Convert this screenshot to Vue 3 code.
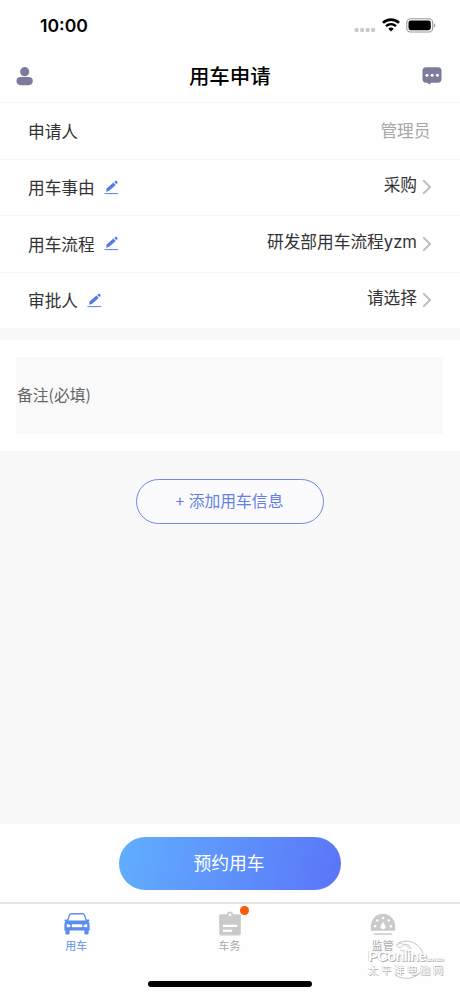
<script setup>
const rows = [
  { label: '申请人', value: '管理员', muted: true },
  { label: '用车事由', value: '采购', edit: true, lift: 'high' },
  { label: '用车流程', value: '研发部用车流程yzm', edit: true, lift: 'low' },
  { label: '审批人', value: '请选择', edit: true, lift: 'high' },
]
</script>

<template>
  <div class="screen">
    <div class="status">
      <span class="time">10:00</span>
      <div class="indicators">
        <svg class="dots" width="22" height="6" viewBox="0 0 22 6" fill="#c9c9cb">
          <rect x="0.7" y="1" width="3.9" height="4" rx="1.3" />
          <rect x="6.2" y="1" width="3.9" height="4" rx="1.3" />
          <rect x="11.7" y="1" width="3.9" height="4" rx="1.3" />
          <rect x="17.2" y="1" width="3.9" height="4" rx="1.3" />
        </svg>
        <svg class="wifi" width="18" height="14" viewBox="0 0 18 14" fill="none" stroke="#000">
          <path d="M1 4.9C5.4.6 12.6.6 17 4.9" stroke-width="2.7" />
          <path d="M4 8.2c2.9-2.7 7.1-2.7 10 0" stroke-width="2.4" />
          <path d="M9 13.4 6.3 10.7c1.6-1.5 3.8-1.5 5.4 0Z" fill="#000" stroke="none" />
        </svg>
        <svg class="battery" width="30" height="15" viewBox="0 0 30 15">
          <rect x="0.8" y="0.8" width="25.9" height="13.2" rx="3.8" fill="none" stroke="#999" stroke-width="1.1" />
          <rect x="2.5" y="2.6" width="22.3" height="9.6" rx="2.1" />
          <path d="M28 5.2c1.8.7 1.8 3.7 0 4.4Z" fill="#999" />
        </svg>
      </div>
    </div>

    <header class="header">
      <svg width="18" height="20" viewBox="0 0 18 20" fill="#7c7b9c">
        <circle cx="8.7" cy="5.7" r="4.6" />
        <rect x="0.5" y="11" width="16.3" height="8.2" rx="4.1" />
      </svg>
      <h1>用车申请</h1>
      <svg width="20" height="20" viewBox="0 0 20 20">
        <path d="M4 1.2h12a3.5 3.5 0 0 1 3.5 3.5v8.6a3.5 3.5 0 0 1-3.5 3.4H9.2l-2 1.9-1.9-1.9H4A3.5 3.5 0 0 1 .5 13.3V4.7A3.5 3.5 0 0 1 4 1.2Z" fill="#7c7b9c" />
        <g fill="#fff"><circle cx="5" cy="9.2" r="1.5" /><circle cx="10.2" cy="9.2" r="1.5" /><circle cx="15.4" cy="9.2" r="1.5" /></g>
      </svg>
    </header>

    <section class="form">
      <div v-for="row in rows" :key="row.label" class="row">
        <span class="label">{{ row.label }}</span>
        <svg v-if="row.edit" class="pen" width="15" height="15" viewBox="0 0 15 15" fill="#5578ea">
          <path d="m1.9 11.7 1-3.5 6.6-5.6 2.2 2.5-6.5 5.7Z" />
          <path d="m10.3 1.9 1-.9c.5-.4 1-.4 1.4 0l.8.9c.4.4.3.9-.1 1.3l-1 .9Z" />
          <path d="M.5 13h13.7v1.1H.5Z" opacity=".85" />
        </svg>
        <span class="value" :class="[row.lift, { muted: row.muted }]">{{ row.value }}</span>
        <svg v-if="!row.muted" class="chevron" width="10" height="16" viewBox="0 0 10 16" fill="none" stroke="#bfc0c5" stroke-width="2">
          <path d="m1.2 1.2 6.8 6.8-6.8 6.8" />
        </svg>
      </div>
    </section>

    <section class="remark"><div class="field">备注(必填)</div></section>

    <main class="content"><button class="add">+ 添加用车信息</button></main>

    <div class="action"><button class="book">预约用车</button></div>

    <nav class="tabs">
      <div class="tab active">
        <svg width="28" height="24" viewBox="0 0 28 24">
          <path d="M4.5 9 6.4 3.4C6.8 2.2 7.5 1.7 8.8 1.7h10.4c1.3 0 2 .5 2.4 1.7L23.5 9" fill="none" stroke="#5b8cf0" stroke-width="1.4" />
          <path d="M4.5 8.5h19l1.3-1.2 1.6.4.2 1.2-1.3.6c.9.7 1.3 1.8 1.3 3.3v5.8h-1v2.6c0 .8-.4 1.2-1.2 1.2h-1.8c-.8 0-1.2-.4-1.2-1.2v-2.6H6.6v2.6c0 .8-.4 1.2-1.2 1.2H3.6c-.8 0-1.2-.4-1.2-1.2v-2.6h-1v-5.8c0-1.5.4-2.6 1.3-3.3l-1.3-.6.2-1.2 1.6-.4Z" fill="#5b8cf0" />
          <g fill="#fff"><path d="M3.8 12c2 .1 3.5.9 4.1 2.1-.4 1-2.2 1.3-4.1.9Z" /><path d="M24.2 12c-2 .1-3.5.9-4.1 2.1.4 1 2.2 1.3 4.1.9Z" /><rect x="8.8" y="12.3" width="10.4" height="2.9" /></g>
        </svg>
        <span>用车</span>
      </div>
      <div class="tab">
        <div class="badged">
          <svg width="24" height="26" viewBox="0 0 24 26">
            <path d="M3.2 3.2h5.4a3.5 3.5 0 0 1 6.8 0h5.4c1.3 0 2 .7 2 2v17.2c0 1.3-.7 2-2 2H3.2c-1.3 0-2-.7-2-2V5.2c0-1.3.7-2 2-2Z" fill="#cacaca" />
            <g fill="#fff"><circle cx="12" cy="3.8" r="1.4" /><rect x="4.8" y="13.7" width="14.5" height="2.3" /><rect x="4.8" y="18.7" width="9.3" height="2.2" /></g>
          </svg>
          <i class="badge"></i>
        </div>
        <span>车务</span>
      </div>
      <div class="tab">
        <svg width="26" height="23" viewBox="0 0 26 23">
          <path d="M.8 17.7V13a12.2 12.2 0 0 1 24.4 0v4.7Z" fill="#cacaca" />
          <path d="M4 20.3h18v1.5H4Z" fill="#cacaca" />
          <g fill="#fff"><circle cx="5" cy="13.3" r="1.3" /><circle cx="7.2" cy="7.5" r="1.3" /><circle cx="13" cy="5" r="1.3" /><circle cx="18.8" cy="7.5" r="1.3" /><circle cx="21" cy="13.3" r="1.3" /><path d="M13 8.5c.6 2.3 2.5 3.4 2.5 5.3a2.5 2.5 0 0 1-5 0c0-1.9 1.9-3 2.5-5.3Z" /></g>
        </svg>
        <span>监管</span>
      </div>
    </nav>

    <div class="watermark">
      <svg class="globe" width="40" height="42" viewBox="0 0 40 42" fill="none" stroke="#c4c4c4">
        <path d="M10 4.2C22-2.4 37 7.3 36 22M34 31c-6 10-19 10-27 5" />
        <path d="m8 6 5-2 3 2-4 3Zm8-1 5 1 2 4-3-2Zm-4 6 4 1 2 3" stroke-width=".8" />
      </svg>
      <div class="brand">PConline<small>.com.cn</small></div>
      <div class="site">太平洋电脑网</div>
    </div>
    <div class="home"></div>
  </div>
</template>

<style>
body { margin: 0; }
</style>

<style scoped>
.screen {
  position: relative;
  display: flex;
  flex-direction: column;
  box-sizing: border-box;
  width: 460px;
  height: 996px;
  overflow: hidden;
  background: #fefefe;
  color: #333;
  font-family: "Noto Sans CJK SC", sans-serif;
}
svg { display: block; flex: none; }
button { font-family: inherit; padding: 0; box-sizing: border-box; }
.status {
  display: flex;
  height: 50px;
  box-sizing: border-box;
  padding: 0 23px 0 40px;
  align-items: center;
  justify-content: space-between;
}
.time { font: 600 17.6px/22px Inter, sans-serif; color: #000; padding-top: 2px; }
.indicators { display: flex; align-items: center; }
.dots { margin: 9px 6px 0 0; }
.wifi { margin-right: 6px; }
.battery { margin-right: 1px; }
.header {
  display: flex;
  align-items: center;
  justify-content: space-between;
  height: 53px;
  box-sizing: border-box;
  border-bottom: 1px solid #f4f4f4;
  padding: 0 18.5px 1px 16px;
}
h1 { margin: 0 0 1px 4px; color: #000; font-size: 20.4px; line-height: 28px; font-weight: 500; }
.row {
  display: flex;
  align-items: center;
  height: 56.5px;
  box-sizing: border-box;
  padding: 0 28px;
  border-bottom: 1px solid #f5f5f5;
  font-size: 16.7px;
  line-height: 24px;
}
.row:last-child { border-bottom-color: #fafafa; }
.pen { margin-left: 9px; }
.value { margin-left: auto; font-family: Inter, "Noto Sans CJK SC", sans-serif; }
.value.muted { color: #a8a8a8; padding-right: 1.5px; }
.value.high { padding-bottom: 5px; }
.value.low { padding-bottom: 3px; }
.chevron { margin-left: 5px; }
.remark {
  height: 122px;
  box-sizing: border-box;
  border-top: 11px solid #f8f8f8;
  padding: 17px 17px 17px 16px;
  background: #fff;
}
.field {
  height: 77px;
  display: flex;
  align-items: center;
  background: #f9f9f9;
  color: #666;
  font-size: 15.8px;
  padding: 0 0 2px 1px;
  box-sizing: border-box;
}
.content {
  flex: 1;
  display: flex;
  justify-content: center;
  align-items: flex-start;
  padding-top: 28px;
  background: #f8f8f8;
}
.add {
  width: 188px;
  height: 45px;
  border: 1.4px solid #6d8ae8;
  border-radius: 23px;
  background: #fbfbfd;
  color: #6680df;
  font-size: 15.8px;
  word-spacing: .8px;
  padding: 0 1px 2px 0;
}
.action {
  height: 78px;
  display: flex;
  box-sizing: border-box;
  padding-top: 13px;
  justify-content: center;
}
.book {
  width: 222px;
  height: 53px;
  border: 0;
  border-radius: 27px;
  background: linear-gradient(105deg, #60acff 5%, #5b77f8 95%);
  color: #fff;
  font-size: 17.8px;
  padding: 0 2px 3px 0;
}
.tabs {
  display: grid;
  grid-template-columns: repeat(3, 1fr);
  height: 94px;
  box-sizing: border-box;
  border-top: 2px solid #e6e6e6;
}
.tab {
  display: grid;
  grid-template-rows: 33px 16px;
  justify-items: center;
  align-items: end;
  align-content: start;
  color: #aaa;
  font-size: 11px;
  line-height: 16px;
}
.tab > svg { margin-bottom: 1px; }
.tab span { margin-right: 1px; }
.tab.active { color: #6791ed; }
.badged { position: relative; }
.badge {
  position: absolute;
  right: -7px;
  top: -5.5px;
  width: 9px;
  height: 9px;
  border-radius: 50%;
  background: #fa5c0a;
}
.home {
  position: absolute;
  left: 148px;
  bottom: 9px;
  width: 164px;
  height: 6px;
  border-radius: 3px;
  background: #000;
}
.watermark {
  position: absolute;
  left: 368px;
  top: 949px;
  width: 80px;
  color: #fff;
  text-shadow: 1px 1px 0 #b0b0b0, -.5px -.5px 0 #c4c4c4;
}
.globe { position: absolute; left: 20px; top: -10px; }
.brand { position: relative; font: 700 15px/13px "Liberation Sans", sans-serif; white-space: nowrap; letter-spacing: -.9px; }
.brand small { font-size: 6px; letter-spacing: -.8px; }
.site { position: relative; font-size: 10px; line-height: 8px; letter-spacing: 3px; font-weight: 400; white-space: nowrap; }
</style>
